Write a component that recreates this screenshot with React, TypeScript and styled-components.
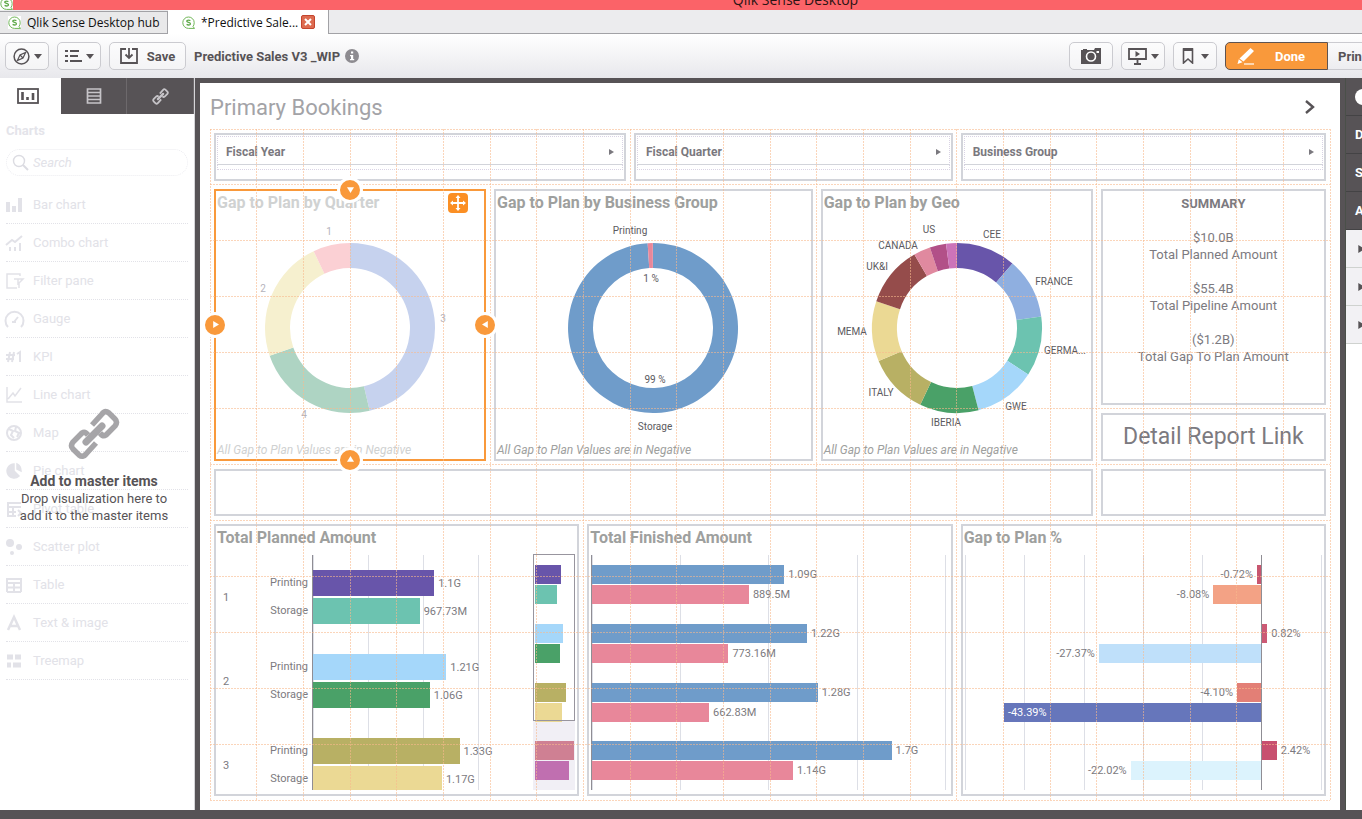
import React from "react";
import styled, { createGlobalStyle, css } from "styled-components";

const colors = {
  dark: "#575356",
  orange: "#f9993b",
  ink: "#575356",
  frame: "#d2d4da",
  text: "#7c7a80",
};

const Global = createGlobalStyle`
  * { box-sizing: border-box; }
  html, body { margin: 0; padding: 0; }
  body {
    font-family: Roboto, "Liberation Sans", sans-serif;
    font-size: 12px;
    color: ${colors.ink};
    background: ${colors.dark};
  }
  button { font: inherit; color: inherit; cursor: pointer; margin: 0; }
  svg { flex: none; }
`;

const Window = styled.div`
  display: flex;
  flex-direction: column;
  height: 100vh;
  min-height: 760px;
  overflow: hidden;
`;

/* ---------- window chrome ---------- */

const TitleBar = styled.header`
  display: flex;
  flex: none;
  align-items: flex-end;
  height: 10px;
  background: #fb6368;
  overflow: hidden;
  font-family: "Open Sans", sans-serif;
`;

const TitleText = styled.div`
  flex: 1;
  padding-left: 216px;
  text-align: center;
  color: #2a1414;
  font-size: 14px;
  line-height: 20px;
`;

const TabStrip = styled.nav`
  display: flex;
  flex: none;
  align-items: flex-end;
  height: 24px;
  background: #ececee;
  border-bottom: 1px solid #a2a2a6;
  font-family: "Open Sans", sans-serif;
`;

const BrowserTab = styled.div<{ $active?: boolean }>`
  display: flex;
  align-items: center;
  gap: 6px;
  flex: none;
  height: ${(p) => (p.$active ? 24 : 22)}px;
  width: ${(p) => (p.$active ? 161 : 168)}px;
  padding-left: ${(p) => (p.$active ? 14 : 8)}px;
  margin-bottom: ${(p) => (p.$active ? -1 : 0)}px;
  background: ${(p) => (p.$active ? "#fff" : "#e9e9ea")};
  border: solid #a2a2a6;
  border-width: ${(p) => (p.$active ? "0 1px 0 0" : "1px 1px 0 0")};
  color: #101010;
  font-size: 12px;
  white-space: nowrap;
`;

const CloseTab = styled.button`
  display: grid;
  place-items: center;
  width: 14px;
  height: 14px;
  margin-left: -3px;
  padding: 0;
  border: 1px solid #c4452f;
  border-radius: 2px;
  background: #dd6b50;
`;

/* ---------- toolbar ---------- */

const Toolbar = styled.div`
  display: flex;
  flex: none;
  align-items: center;
  gap: 8px;
  height: 44px;
  padding-left: 5px;
  background: linear-gradient(#fff, #e8e8ec);
`;

const ToolButton = styled.button<{ $width?: number; $gap?: number }>`
  display: flex;
  align-items: center;
  justify-content: center;
  gap: ${(p) => p.$gap ?? 4}px;
  flex: none;
  width: ${(p) => p.$width ?? 44}px;
  height: 28px;
  padding: 0;
  border: 1px solid #cbcbd0;
  border-radius: 5px;
  background: rgba(255, 255, 255, 0.4);
  font-size: 13px;
  font-weight: 700;
`;

const AppTitle = styled.div`
  display: flex;
  flex: 1;
  align-items: center;
  gap: 5px;
  font-size: 13px;
  font-weight: 700;
  white-space: nowrap;
`;

const EditGroup = styled.div`
  display: flex;
  flex: none;
`;

const DoneButton = styled.button`
  display: flex;
  align-items: center;
  gap: 20px;
  width: 103px;
  height: 28px;
  padding: 0 0 0 11px;
  border: 1px solid #5e5350;
  border-radius: 5px 0 0 5px;
  background: ${colors.orange};
  color: #fff;
  font-size: 13px;
  font-weight: 700;
`;

const SheetButton = styled.button`
  width: 34px;
  height: 28px;
  padding: 0 0 0 10px;
  border: solid #cbcbd0;
  border-width: 1px 0;
  background: transparent;
  font-size: 13px;
  font-weight: 700;
  text-align: left;
  overflow: hidden;
`;

/* ---------- workspace ---------- */

const Workspace = styled.main`
  display: flex;
  flex: 1;
  min-height: 0;
  padding-bottom: 9px;
`;

const Sidebar = styled.aside`
  display: flex;
  flex-direction: column;
  flex: none;
  width: 195px;
  background: #fff;
  border-right: 1px solid #d5d5d8;
`;

const SidebarTabs = styled.div`
  display: grid;
  grid-template-columns: 61px 66px 67px;
  height: 36px;
`;

const SidebarTab = styled.button<{ $active?: boolean }>`
  display: grid;
  place-items: center;
  padding: 0;
  border: 0;
  border-right: 1px solid #6d696c;
  color: #c6c4c8;
  background: ${colors.dark};
  ${(p) =>
    p.$active &&
    css`
      background: #fff;
      color: ${colors.ink};
      border: 0;
      padding-right: 6px;
    `}
`;

const SidebarBody = styled.div`
  position: relative;
  flex: 1;
  padding: 8px 6px 0;
`;

const SidebarHeading = styled.h2`
  margin: 0;
  height: 27px;
  color: #e4e4ea;
  font-size: 13px;
  line-height: 18px;
`;

const SearchField = styled.label`
  display: flex;
  align-items: center;
  gap: 4px;
  height: 27px;
  margin-bottom: 10px;
  padding-left: 5px;
  border: 1px dotted #ececf0;
  border-radius: 14px;
  color: #dcdce2;
`;

const SearchInput = styled.input`
  width: 120px;
  padding: 0;
  border: 0;
  outline: 0;
  background: transparent;
  font: italic 13px Roboto, sans-serif;
  &::placeholder {
    color: #e2e2e8;
    opacity: 1;
  }
`;

const ChartList = styled.ul`
  margin: 0;
  padding: 0;
  list-style: none;
`;

const ChartItem = styled.li`
  display: flex;
  align-items: center;
  gap: 11px;
  height: 38px;
  border-bottom: 1px dotted #e2e2e8;
  color: #e2e2e8;
  font-size: 13px;
`;

const DropHint = styled.div`
  position: absolute;
  top: 294px;
  left: 0;
  right: 0;
  display: flex;
  flex-direction: column;
  align-items: center;
  padding-right: 6px;
  font-size: 13px;
  line-height: 17px;
  text-align: center;
`;

const HintTitle = styled.strong`
  margin-top: 13px;
  font-size: 14px;
  line-height: 17px;
`;

const HintText = styled.span`
  width: 160px;
`;

const Sheet = styled.section`
  display: flex;
  flex-direction: column;
  flex: 1;
  min-width: 0;
  margin: 5px 5px 0;
  padding: 0 10px 10px;
  background: #fff;
`;

const SheetHeader = styled.div`
  display: flex;
  flex: none;
  align-items: center;
  justify-content: space-between;
  height: 46px;
  padding: 2px 12px 0 0;
`;

const SheetTitle = styled.h1`
  margin: 0;
  color: #a3a3a7;
  font-size: 22px;
  font-weight: 400;
`;

const IconButton = styled.button`
  display: grid;
  place-items: center;
  padding: 0;
  border: 0;
  background: none;
`;

const Canvas = styled.div`
  position: relative;
  display: grid;
  flex: 1;
  min-height: 0;
  grid-template-columns: repeat(24, minmax(0, 1fr));
  grid-template-rows: repeat(12, minmax(0, 1fr));
`;

const Guides = styled.svg`
  position: absolute;
  inset: 0;
  width: 100%;
  height: 100%;
  overflow: visible;
  pointer-events: none;
`;

const Panel = styled.article<{ $area: string; $selected?: boolean }>`
  position: relative;
  grid-area: ${(p) => p.$area};
  display: flex;
  flex-direction: column;
  min-width: 0;
  min-height: 0;
  margin: 4px;
  padding: 1px;
  border: 2px solid ${(p) => (p.$selected ? colors.orange : colors.frame)};
`;

const PanelTitle = styled.h3<{ $faded?: boolean }>`
  margin: 0;
  color: ${(p) => (p.$faded ? "#d0d2d2" : "#9ea09e")};
  font-size: 16px;
  line-height: 22px;
  white-space: nowrap;
`;

const Footnote = styled.p<{ $faded?: boolean }>`
  margin: 0;
  color: ${(p) => (p.$faded ? "#cfd1d1" : "#9ea09e")};
  font-size: 12px;
  font-style: italic;
  line-height: 16px;
`;

const DonutBox = styled.div`
  display: flex;
  flex: 1;
  align-items: center;
  justify-content: center;
  min-height: 0;
`;

const DonutSvg = styled.svg`
  display: block;
  width: 260px;
  height: 220px;
  overflow: visible;
  font-size: 10px;
  text-anchor: middle;
`;

const Handle = styled.span<{ $side: "top" | "right" | "bottom" | "left" }>`
  position: absolute;
  z-index: 2;
  display: grid;
  place-items: center;
  width: 26px;
  height: 26px;
  border: 3px solid #fff;
  border-radius: 50%;
  background: ${colors.orange};
  ${(p) =>
    p.$side === "top" || p.$side === "bottom"
      ? css`
          left: calc(50% - 13px);
          ${p.$side}: -14px;
        `
      : css`
          top: calc(50% - 13px);
          ${p.$side}: -14px;
        `}
`;

const MoveButton = styled.button`
  position: absolute;
  top: 2px;
  right: 16px;
  display: grid;
  place-items: center;
  width: 20px;
  height: 20px;
  padding: 0;
  border: 0;
  border-radius: 4px;
  background: #fb8f24;
`;

/* ---------- filters ---------- */

const FilterButton = styled.button`
  display: flex;
  flex: none;
  align-items: center;
  justify-content: space-between;
  height: 29px;
  padding: 2px 8px 0;
  border: 1px dotted #d9d3e4;
  border-bottom: 1px solid ${colors.frame};
  background: none;
  color: #7a787e;
  font-size: 12px;
  font-weight: 700;
`;

const FilterFoot = styled.div`
  height: 5px;
  border: dotted #d9d3e4;
  border-width: 0 1px 1px;
`;

/* ---------- text panels ---------- */

const Summary = styled.div`
  padding-top: 3px;
  color: ${colors.text};
  font-size: 13px;
  line-height: 17px;
  text-align: center;
`;

const SummaryTitle = styled.h3`
  margin: 0;
  font-size: 13px;
  line-height: 17px;
`;

const SummaryEntry = styled.p`
  margin: 17px 0 0;
`;

const SummaryLine = styled.span`
  display: block;
`;

const ReportLink = styled.a`
  display: grid;
  flex: 1;
  place-items: center;
  color: ${colors.text};
  font-size: 23px;
  text-decoration: none;
  white-space: nowrap;
`;

/* ---------- bar charts ---------- */

const ChartRow = styled.div`
  display: flex;
  flex: 1;
  min-height: 0;
  margin: 6px 1px 3px;
  color: ${colors.text};
  font-size: 11px;
`;

const DimensionColumn = styled.div`
  flex: none;
  width: 94px;
  overflow: hidden;
`;

const DimensionGroup = styled.div`
  display: grid;
  grid-template-columns: 16px 1fr;
  align-items: center;
  justify-items: center;
  height: 84px;
`;

const DimensionNames = styled.div`
  display: grid;
  gap: 2px;
  justify-self: end;
  padding-right: 4px;
  line-height: 26px;
  text-align: right;
`;

const Plot = styled.div<{ $step: string; $axis?: boolean }>`
  display: flex;
  flex: 1;
  flex-direction: column;
  min-width: 0;
  overflow: hidden;
  border-left: ${(p) => (p.$axis ? "1px solid #8f8d94" : "0")};
  background-image: repeating-linear-gradient(
    90deg,
    #dddfe6 0 1px,
    transparent 1px ${(p) => p.$step}
  );
`;

const BarGroup = styled.div<{ $fixed?: boolean }>`
  display: flex;
  flex-direction: column;
  justify-content: center;
  gap: ${(p) => (p.$fixed ? 2 : 1)}px;
  flex: ${(p) => (p.$fixed ? "none" : "1")};
  height: ${(p) => (p.$fixed ? "84px" : "auto")};
`;

const BarLine = styled.div<{ $thick?: boolean }>`
  display: flex;
  align-items: center;
  gap: 4px;
  height: ${(p) => (p.$thick ? 26 : 19)}px;
  white-space: nowrap;
`;

const Bar = styled.div<{ $color: string }>`
  flex: none;
  height: 100%;
  background: ${(p) => p.$color};
`;

const InsideLabel = styled.span`
  padding-left: 4px;
  color: #fff;
  line-height: 19px;
`;

const SplitLine = styled.div`
  display: grid;
  grid-template-columns: 83fr 17fr;
  height: 19px;
`;

const NegativeSide = styled.div`
  display: flex;
  align-items: center;
  justify-content: flex-end;
  gap: 4px;
`;

const PositiveSide = styled.div`
  display: flex;
  align-items: center;
  gap: 4px;
  border-left: 1px solid #8f8d94;
  margin: -21px 0;
`;

const PositiveBar = styled(Bar)`
  height: 19px;
`;

const MiniMap = styled.div`
  position: relative;
  display: flex;
  flex-direction: column;
  flex: none;
  width: 42px;
  padding-left: 2px;
  background: linear-gradient(transparent 70%, #f1eff5 70%);
`;

const MiniWindow = styled.div`
  position: absolute;
  top: -1px;
  left: 0;
  right: 0;
  height: 71%;
  border: 1px solid #98959e;
`;

/* ---------- properties panel ---------- */

const Properties = styled.aside`
  flex: none;
  width: 17px;
  background: #fff;
  border-left: 1px solid #4a5049;
  overflow: hidden;
`;

const PropertySection = styled.div<{ $light?: boolean }>`
  display: flex;
  align-items: center;
  height: 38px;
  padding-left: ${(p) => (p.$light ? 11 : 9)}px;
  background: ${(p) => (p.$light ? "#f2f1f4" : colors.dark)};
  border-bottom: 1px solid ${(p) => (p.$light ? "#cfd2cf" : "#444345")};
  color: ${(p) => (p.$light ? colors.ink : "#fff")};
  font-size: 13px;
  font-weight: 700;
`;

/* ---------- icons ---------- */

const SenseLogo = () => (
  <svg width="13" height="13" viewBox="0 0 13 13" aria-hidden="true">
    <rect width="13" height="13" fill="#fff" />
    <path d="M11 10.6 L12.6 12.4 H6.5 A5.7 5.7 0 1 1 12.2 6.7 Q12.2 9 11 10.6Z" fill="#fff" stroke="#6fb657" strokeWidth="1" />
    <path d="M8.4 4.6 Q6.4 3.6 5 4.6 Q4.2 5.8 6.5 6.4 Q9 7 8.2 8.4 Q6.6 9.6 4.6 8.4" fill="none" stroke="#5fa94a" strokeWidth="1.3" />
  </svg>
);

const Caret = () => (
  <svg width="8" height="5" viewBox="0 0 8 5" aria-hidden="true">
    <path d="M0 0H8L4 5Z" fill="currentColor" />
  </svg>
);

const Triangle = ({ turn = 0, size = 6, fill = "currentColor" }: { turn?: number; size?: number; fill?: string }) => (
  <svg width={size} height={size} viewBox="0 0 6 6" aria-hidden="true">
    <path d="M1 0L6 3L1 6Z" fill={fill} transform={`rotate(${turn} 3 3)`} />
  </svg>
);

const CompassIcon = () => (
  <svg width="17" height="17" viewBox="0 0 17 17" aria-hidden="true">
    <circle cx="8.500" cy="8.500" r="7.400" fill="none" stroke="currentColor" strokeWidth="1.500" />
    <path d="M12.600 4.400L10 10L4.400 12.600L7 7Z" fill="none" stroke="currentColor" strokeWidth="1.200" />
    <path d="M7 7L10 10" stroke="currentColor" strokeWidth="1.200" />
  </svg>
);

const ListIcon = () => (
  <svg width="17" height="14" viewBox="0 0 17 14" aria-hidden="true">
    <path d="M0 2H3M0 7H3M0 12H3" stroke="currentColor" strokeWidth="2" />
    <path d="M5 2H14M5 7H13M5 12H17" stroke="currentColor" strokeWidth="2" />
  </svg>
);

const SaveIcon = () => (
  <svg width="18" height="16" viewBox="0 0 18 16" aria-hidden="true">
    <path d="M6 1H1V15H17V1H12" fill="none" stroke="currentColor" strokeWidth="1.800" />
    <path d="M9 0V9M5.500 6.500L9 10L12.500 6.500" fill="none" stroke="currentColor" strokeWidth="1.800" />
  </svg>
);

const InfoIcon = () => (
  <svg width="14" height="14" viewBox="0 0 14 14" aria-hidden="true">
    <circle cx="7" cy="7" r="7" fill="#8d8b90" />
    <path d="M6 2.500H8.200V4.500H6ZM5 6H8.200V10H9.200V11.300H5V10H6V7.200H5Z" fill="#fff" />
  </svg>
);

const CameraIcon = () => (
  <svg width="20" height="16" viewBox="0 0 20 16" aria-hidden="true">
    <path d="M0 2H2V1H6V2H13L14 0H20V16H0Z" fill="currentColor" />
    <circle cx="10" cy="8.500" r="4.500" fill="none" stroke="#fff" strokeWidth="1.600" />
    <path d="M15.500 3H18V5H15.500Z" fill="#fff" />
  </svg>
);

const PresentIcon = () => (
  <svg width="19" height="17" viewBox="0 0 19 17" aria-hidden="true">
    <path d="M1 1H18V11H1Z" fill="none" stroke="currentColor" strokeWidth="1.800" />
    <path d="M7.500 3L12 6L7.500 9Z" fill="currentColor" />
    <path d="M9.500 11V15M6 16H13" stroke="currentColor" strokeWidth="1.800" />
  </svg>
);

const BookmarkIcon = () => (
  <svg width="12" height="16" viewBox="0 0 12 16" aria-hidden="true">
    <path d="M1.500 1H10.500V15L6 11L1.500 15Z" fill="none" stroke="currentColor" strokeWidth="1.600" />
    <path d="M1 0H11V3H1Z" fill="currentColor" />
  </svg>
);

const PencilIcon = () => (
  <svg width="18" height="17" viewBox="0 0 18 17" aria-hidden="true">
    <path d="M13.500 0L17 3L6.500 13.500L2.500 10.500ZM1.800 11.300L5.500 14.300L0.500 16Z" fill="#fff" />
    <path d="M7 16H17" stroke="#fff" strokeWidth="1.200" />
  </svg>
);

const ChartTabIcon = () => (
  <svg width="22" height="16" viewBox="0 0 22 16" aria-hidden="true">
    <rect x="1" y="1" width="20" height="14" fill="none" stroke="currentColor" strokeWidth="1.800" />
    <path d="M5.500 4V12M10.500 9V12M16 5V12" stroke="currentColor" strokeWidth="2.600" />
  </svg>
);

const SheetTabIcon = () => (
  <svg width="16" height="16" viewBox="0 0 16 16" aria-hidden="true">
    <path d="M1.500 1H14.500V15H1.500ZM2 4.500H14M2 8H14M2 11.500H14" fill="none" stroke="currentColor" strokeWidth="1.700" />
  </svg>
);

const LinkIcon = ({ size, color = "currentColor" }: { size: number; color?: string }) => (
  <svg width={size} height={size} viewBox="0 0 52 52" fill="none" stroke={color} strokeWidth="5.500" aria-hidden="true">
    <path d="M24 17L34 6Q37 2 41 5L47 11Q50 14 47 18L38 27Q35 29 32 25" />
    <path d="M28 35L18 46Q15 50 11 47L5 41Q2 38 5 34L14 25Q17 23 20 27" />
    <path d="M18 34L34 18" strokeWidth="7" strokeLinecap="round" />
  </svg>
);

const SearchIcon = () => (
  <svg width="17" height="17" viewBox="0 0 17 17" aria-hidden="true">
    <circle cx="7" cy="7" r="5.500" fill="none" stroke="currentColor" strokeWidth="1.400" />
    <path d="M11 11L16 16" stroke="currentColor" strokeWidth="2" />
  </svg>
);

const listIcons: Record<string, React.ReactNode> = {
  "Bar chart": <path d="M2 15V5M8 15V9M14 15V1" strokeWidth="4" />,
  "Combo chart": <path d="M0 10L6 5L9 7L16 1M4 16V12M9 16V12M14 16V8" strokeWidth="2" />,
  "Filter pane": <path d="M11 15H1V1H14V3M8 6H17L13 10V15M12 6V12" strokeWidth="1.500" />,
  Gauge: <path d="M2 16A9 9 0 1 1 15 16M8 11L12 6M6 11H10" strokeWidth="2" />,
  KPI: <path d="M0 6H9M0 10H8M4 3L2 13M8 3L6 13M11 5L14 3V13" strokeWidth="2" />,
  "Line chart": <path d="M1 0V15H16M2 12L7 6L9 9L15 1" strokeWidth="1.500" />,
  Map: <path d="M15 8A7 7 0 1 1 1 8A7 7 0 1 1 15 8M3 4L7 6L5 10L8 13M10 2L9 6L13 8L11 12" strokeWidth="2" />,
  "Pie chart": <path d="M8 8V1A7 7 0 1 0 13 13ZM11 6V1Q15 3 15 8Z" strokeWidth="1.500" fill="currentColor" />,
  "Pivot table": <path d="M1 2H15M1 6H15M1 11H10M1 15H10M2 1V15M7 5V15M12 9L15 12L12 15" strokeWidth="2" />,
  "Scatter plot": (
    <g fill="currentColor" stroke="none">
      <circle cx="4" cy="4" r="4" />
      <circle cx="13" cy="8" r="3" />
      <circle cx="6" cy="14" r="2" />
    </g>
  ),
  Table: <path d="M1 2H15M1 6H15M1 10.500H15M1 15H15M1 1V15M8 6V15M15 1V15" strokeWidth="2" />,
  "Text & image": <path d="M2 15L8 2L14 15M4 11H12" strokeWidth="2.500" />,
  Treemap: <path d="M1 4H7M9 4H15M1 12H5M7 12H15" strokeWidth="5" />,
};

/* ---------- data ---------- */

type Slice = { end: number; color: string };
type Label = { text: string; x: number; y: number };

const quarterSlices: Slice[] = [
  { end: 166.6, color: "#c6d2ee" },
  { end: 251, color: "#aed4c3" },
  { end: 334.7, color: "#f6f0cf" },
  { end: 360, color: "#fbd0d4" },
];
const quarterLabels: Label[] = [
  { text: "1", x: -21, y: -97 },
  { text: "2", x: -87, y: -40 },
  { text: "3", x: 93, y: -10 },
  { text: "4", x: -46, y: 86 },
];
const groupSlices: Slice[] = [
  { end: 356.4, color: "#6f9cca" },
  { end: 359.9, color: "#e8879a" },
];
const groupLabels: Label[] = [
  { text: "Printing", x: -23, y: -98 },
  { text: "1 %", x: -2, y: -50 },
  { text: "99 %", x: 2, y: 51 },
  { text: "Storage", x: 2, y: 98 },
];
const geoSlices: Slice[] = [
  { end: 40.7, color: "#6855aa" },
  { end: 82.3, color: "#8fafe0" },
  { end: 123.1, color: "#6cc3b0" },
  { end: 165.3, color: "#a5d7fa" },
  { end: 205.6, color: "#4aa168" },
  { end: 247.2, color: "#b8b064" },
  { end: 288.3, color: "#ebd994" },
  { end: 329.9, color: "#954c4b" },
  { end: 341.4, color: "#e0899f" },
  { end: 352.6, color: "#b25088" },
  { end: 360, color: "#cc74b9" },
];
const geoLabels: Label[] = [
  { text: "US", x: -28, y: -99 },
  { text: "CEE", x: 35, y: -94 },
  { text: "CANADA", x: -59, y: -83 },
  { text: "UK&I", x: -80, y: -62 },
  { text: "FRANCE", x: 97, y: -47 },
  { text: "MEMA", x: -105, y: 3 },
  { text: "GERMA...", x: 108, y: 22 },
  { text: "ITALY", x: -76, y: 64 },
  { text: "GWE", x: 59, y: 78 },
  { text: "IBERIA", x: -11, y: 94 },
];

type Value = { value: number; label: string; color: string };

const planned: Value[][] = [
  [
    { value: 1.1, label: "1.1G", color: "#6855aa" },
    { value: 0.968, label: "967.73M", color: "#6cc3b0" },
  ],
  [
    { value: 1.21, label: "1.21G", color: "#a5d7fa" },
    { value: 1.06, label: "1.06G", color: "#4aa168" },
  ],
  [
    { value: 1.33, label: "1.33G", color: "#b8b064" },
    { value: 1.17, label: "1.17G", color: "#ebd994" },
  ],
];
const miniBars = [
  [{ w: 26, c: "#6855aa" }, { w: 22, c: "#6cc3b0" }],
  [{ w: 28, c: "#a5d7fa" }, { w: 25, c: "#4aa168" }],
  [{ w: 31, c: "#b8b064" }, { w: 27, c: "#ebd994" }],
  [{ w: 39, c: "#cf8093" }, { w: 34, c: "#c06fb0" }],
];

const blue = "#6f9cca";
const pink = "#e8879a";
const finished: Value[][] = [
  [{ value: 1.09, label: "1.09G", color: blue }, { value: 0.8895, label: "889.5M", color: pink }],
  [{ value: 1.22, label: "1.22G", color: blue }, { value: 0.773, label: "773.16M", color: pink }],
  [{ value: 1.28, label: "1.28G", color: blue }, { value: 0.663, label: "662.83M", color: pink }],
  [{ value: 1.7, label: "1.7G", color: blue }, { value: 1.14, label: "1.14G", color: pink }],
];

const gap: Value[][] = [
  [{ value: -0.72, label: "-0.72%", color: "#c8566f" }, { value: -8.08, label: "-8.08%", color: "#f3a285" }],
  [{ value: 0.82, label: "0.82%", color: "#cc5a75" }, { value: -27.37, label: "-27.37%", color: "#bfe0fa" }],
  [{ value: -4.1, label: "-4.10%", color: "#e37f76" }, { value: -43.39, label: "-43.39%", color: "#6676bb" }],
  [{ value: 2.42, label: "2.42%", color: "#c8506f" }, { value: -22.02, label: "-22.02%", color: "#dcf3fd" }],
];

/* ---------- components ---------- */

const point = (radius: number, degrees: number) => {
  const a = ((degrees - 90) * Math.PI) / 180;
  return `${(radius * Math.cos(a)).toFixed(2)} ${(radius * Math.sin(a)).toFixed(2)}`;
};

const slicePath = (from: number, to: number) => {
  const large = to - from > 180 ? 1 : 0;
  return `M${point(85, from)}A85 85 0 ${large} 1 ${point(85, to)}L${point(60, to)}A60 60 0 ${large} 0 ${point(60, from)}Z`;
};

const Donut = ({ slices, labels, ink }: { slices: Slice[]; labels: Label[]; ink: string }) => (
  <DonutBox>
    <DonutSvg viewBox="-130 -110 260 220">
      {slices.map((s, i) => (
        <path key={s.color} d={slicePath(i ? slices[i - 1].end : 0, s.end)} fill={s.color} />
      ))}
      {labels.map((l) => (
        <text key={l.text} x={l.x} y={l.y + 4} fill={ink}>
          {l.text}
        </text>
      ))}
    </DonutSvg>
  </DonutBox>
);

const GridGuides = () => (
  <Guides aria-hidden="true">
    <g stroke="#f9b98c" strokeOpacity="0.6" strokeDasharray="2 1" shapeRendering="crispEdges">
      {Array.from({ length: 25 }, (_, i) => (
        <line key={`v${i}`} x1={`${(i * 100) / 24}%`} x2={`${(i * 100) / 24}%`} y1="0" y2="100%" />
      ))}
      {Array.from({ length: 13 }, (_, i) => (
        <line key={`h${i}`} y1={`${(i * 100) / 12}%`} y2={`${(i * 100) / 12}%`} x1="0" x2="100%" />
      ))}
    </g>
  </Guides>
);

const Filter = ({ name, area }: { name: string; area: string }) => (
  <Panel $area={area}>
    <FilterButton>
      {name}
      <Triangle />
    </FilterButton>
    <FilterFoot />
  </Panel>
);

const GapValue = ({ value, label, color }: Value) => (
  <SplitLine>
    <NegativeSide>
      {value < 0 && value > -40 && label}
      {value < 0 && (
        <Bar $color={color} style={{ width: `${-value * 2}%` }}>
          {value <= -40 && <InsideLabel>{label}</InsideLabel>}
        </Bar>
      )}
    </NegativeSide>
    <PositiveSide>
      {value > 0 && (
        <>
          <PositiveBar $color={color} style={{ width: `${value * 10}%` }} />
          {label}
        </>
      )}
    </PositiveSide>
  </SplitLine>
);

export default function App() {
  return (
    <Window>
      <Global />
      <TitleBar>
        <SenseLogo />
        <TitleText>Qlik Sense Desktop</TitleText>
      </TitleBar>
      <TabStrip>
        <BrowserTab>
          <SenseLogo />
          Qlik Sense Desktop hub
        </BrowserTab>
        <BrowserTab $active>
          <SenseLogo />
          *Predictive Sale...
          <CloseTab aria-label="Close tab">
            <svg width="8" height="8" viewBox="0 0 8 8">
              <path d="M1 1L7 7M7 1L1 7" stroke="#fff" strokeWidth="2" />
            </svg>
          </CloseTab>
        </BrowserTab>
      </TabStrip>
      <Toolbar>
        <ToolButton aria-label="Navigation">
          <CompassIcon />
          <Caret />
        </ToolButton>
        <ToolButton aria-label="Menu">
          <ListIcon />
          <Caret />
        </ToolButton>
        <ToolButton $width={77} $gap={9}>
          <SaveIcon />
          Save
        </ToolButton>
        <AppTitle>
          Predictive Sales V3 _WIP <InfoIcon />
        </AppTitle>
        <ToolButton aria-label="Snapshots">
          <CameraIcon />
        </ToolButton>
        <ToolButton aria-label="Stories">
          <PresentIcon />
          <Caret />
        </ToolButton>
        <ToolButton aria-label="Bookmarks" $gap={7}>
          <BookmarkIcon />
          <Caret />
        </ToolButton>
        <EditGroup>
          <DoneButton>
            <PencilIcon />
            Done
          </DoneButton>
          <SheetButton>Prin</SheetButton>
        </EditGroup>
      </Toolbar>

      <Workspace>
        <Sidebar>
          <SidebarTabs>
            <SidebarTab $active aria-label="Charts">
              <ChartTabIcon />
            </SidebarTab>
            <SidebarTab aria-label="Fields">
              <SheetTabIcon />
            </SidebarTab>
            <SidebarTab aria-label="Master items">
              <LinkIcon size={17} />
            </SidebarTab>
          </SidebarTabs>
          <SidebarBody>
            <SidebarHeading>Charts</SidebarHeading>
            <SearchField>
              <SearchIcon />
              <SearchInput placeholder="Search" aria-label="Search charts" />
            </SearchField>
            <ChartList>
              {Object.entries(listIcons).map(([name, icon]) => (
                <ChartItem key={name}>
                  <svg width="16" height="16" viewBox="0 0 16 16" fill="none" stroke="currentColor" overflow="visible">
                    {icon}
                  </svg>
                  {name}
                </ChartItem>
              ))}
            </ChartList>
            <DropHint>
              <LinkIcon size={52} color="#a6a5a8" />
              <HintTitle>Add to master items</HintTitle>
              <HintText>Drop visualization here to add it to the master items</HintText>
            </DropHint>
          </SidebarBody>
        </Sidebar>

        <Sheet>
          <SheetHeader>
            <SheetTitle>Primary Bookings</SheetTitle>
            <IconButton aria-label="Next sheet">
              <svg width="16" height="16" viewBox="0 0 16 16">
                <path d="M4 2L11 8L4 14" fill="none" stroke={colors.ink} strokeWidth="2.400" />
              </svg>
            </IconButton>
          </SheetHeader>
          <Canvas>
            <Filter name="Fiscal Year" area="1 / 1 / 2 / 10" />
            <Filter name="Fiscal Quarter" area="1 / 10 / 2 / 17" />
            <Filter name="Business Group" area="1 / 17 / 2 / 25" />

            <Panel $area="2 / 1 / 7 / 7" $selected>
              <PanelTitle $faded>Gap to Plan by Quarter</PanelTitle>
              <Donut slices={quarterSlices} labels={quarterLabels} ink="#b5b3bb" />
              <Footnote $faded>All Gap to Plan Values are in Negative</Footnote>
              <Handle $side="top"><Triangle turn={90} size={7} fill="#fff" /></Handle>
              <Handle $side="right"><Triangle turn={180} size={7} fill="#fff" /></Handle>
              <Handle $side="bottom"><Triangle turn={270} size={7} fill="#fff" /></Handle>
              <Handle $side="left"><Triangle size={7} fill="#fff" /></Handle>
              <MoveButton aria-label="Move">
                <svg width="16" height="16" viewBox="0 0 16 16">
                  <path d="M8 1V15M1 8H15" stroke="#fff" strokeWidth="1.800" />
                  <path d="M8 0L10.500 3H5.500ZM8 16L5.500 13H10.500ZM0 8L3 5.500V10.500ZM16 8L13 10.500V5.500Z" fill="#fff" />
                </svg>
              </MoveButton>
            </Panel>
            <Panel $area="2 / 7 / 7 / 14">
              <PanelTitle>Gap to Plan by Business Group</PanelTitle>
              <Donut slices={groupSlices} labels={groupLabels} ink="#5c5a60" />
              <Footnote>All Gap to Plan Values are in Negative</Footnote>
            </Panel>
            <Panel $area="2 / 14 / 7 / 20">
              <PanelTitle>Gap to Plan by Geo</PanelTitle>
              <Donut slices={geoSlices} labels={geoLabels} ink="#5c5a60" />
              <Footnote>All Gap to Plan Values are in Negative</Footnote>
            </Panel>
            <Panel $area="2 / 20 / 6 / 25">
              <Summary>
                <SummaryTitle>SUMMARY</SummaryTitle>
                {[
                  ["$10.0B", "Total Planned Amount"],
                  ["$55.4B", "Total Pipeline Amount"],
                  ["($1.2B)", "Total Gap To Plan Amount"],
                ].map(([amount, name]) => (
                  <SummaryEntry key={name}>
                    <SummaryLine>{amount}</SummaryLine>
                    <SummaryLine>{name}</SummaryLine>
                  </SummaryEntry>
                ))}
              </Summary>
            </Panel>
            <Panel $area="6 / 20 / 7 / 25">
              <ReportLink href="#detail">Detail Report Link</ReportLink>
            </Panel>
            <Panel $area="7 / 1 / 8 / 20" />
            <Panel $area="7 / 20 / 8 / 25" />

            <Panel $area="8 / 1 / 13 / 9">
              <PanelTitle>Total Planned Amount</PanelTitle>
              <ChartRow>
                <DimensionColumn>
                  {["1", "2", "3"].map((n) => (
                    <DimensionGroup key={n}>
                      <span>{n}</span>
                      <DimensionNames>
                        <span>Printing</span>
                        <span>Storage</span>
                      </DimensionNames>
                    </DimensionGroup>
                  ))}
                </DimensionColumn>
                <Plot $axis $step="25%">
                  {planned.map((group, i) => (
                    <BarGroup key={i} $fixed>
                      {group.map((v) => (
                        <BarLine key={v.label} $thick>
                          <Bar $color={v.color} style={{ width: `${v.value * 50}%` }} />
                          {v.label}
                        </BarLine>
                      ))}
                    </BarGroup>
                  ))}
                </Plot>
                <MiniMap>
                  {miniBars.map((group, i) => (
                    <BarGroup key={i}>
                      {group.map((b) => (
                        <BarLine key={b.c}>
                          <Bar $color={b.c} style={{ width: b.w }} />
                        </BarLine>
                      ))}
                    </BarGroup>
                  ))}
                  <MiniWindow />
                </MiniMap>
              </ChartRow>
            </Panel>
            <Panel $area="8 / 9 / 13 / 17">
              <PanelTitle>Total Finished Amount</PanelTitle>
              <ChartRow>
                <Plot $axis $step="24.7%">
                  {finished.map((group, i) => (
                    <BarGroup key={i}>
                      {group.map((v) => (
                        <BarLine key={v.label}>
                          <Bar $color={v.color} style={{ width: `${v.value * 49.4}%` }} />
                          {v.label}
                        </BarLine>
                      ))}
                    </BarGroup>
                  ))}
                </Plot>
              </ChartRow>
            </Panel>
            <Panel $area="8 / 17 / 13 / 25">
              <PanelTitle>Gap to Plan %</PanelTitle>
              <ChartRow>
                <Plot $step="16.6%">
                  {gap.map((group, i) => (
                    <BarGroup key={i}>
                      {group.map((v) => (
                        <GapValue key={v.label} {...v} />
                      ))}
                    </BarGroup>
                  ))}
                </Plot>
              </ChartRow>
            </Panel>
            <GridGuides />
          </Canvas>
        </Sheet>

        <Properties>
          <PropertySection>
            <svg width="16" height="16" viewBox="0 0 16 16" aria-hidden="true">
              <circle cx="8" cy="8" r="8" fill="#fff" />
              <path d="M7 3H10V5H7Z" fill={colors.orange} />
            </svg>
          </PropertySection>
          <PropertySection>D</PropertySection>
          <PropertySection>S</PropertySection>
          <PropertySection>A</PropertySection>
          <PropertySection $light><Triangle size={8} /></PropertySection>
          <PropertySection $light><Triangle size={8} /></PropertySection>
          <PropertySection $light><Triangle size={8} /></PropertySection>
        </Properties>
      </Workspace>
    </Window>
  );
}
